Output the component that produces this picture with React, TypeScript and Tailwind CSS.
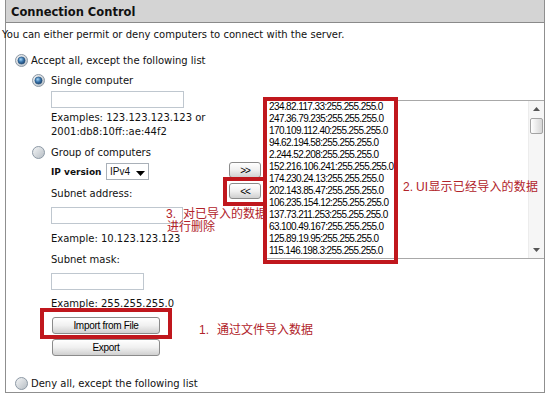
import type { ReactNode } from "react";

const ENTRIES = [
  "234.82.117.33:255.255.255.0",
  "247.36.79.235:255.255.255.0",
  "170.109.112.40:255.255.255.0",
  "94.62.194.58:255.255.255.0",
  "2.244.52.208:255.255.255.0",
  "152.216.106.241:255.255.255.0",
  "174.230.24.13:255.255.255.0",
  "202.143.85.47:255.255.255.0",
  "106.235.154.12:255.255.255.0",
  "137.73.211.253:255.255.255.0",
  "63.100.49.167:255.255.255.0",
  "125.89.19.95:255.255.255.0",
  "115.146.198.3:255.255.255.0",
];

function Radio({ id, checked }: { id: string; checked?: boolean }) {
  return (
    <svg width="13" height="13" viewBox="0 0 13 13" className="shrink-0">
      <defs>
        <linearGradient id={`${id}-ring`} x1="0" y1="0" x2="1" y2="1">
          <stop offset="0" stopColor="#f6f7f8" />
          <stop offset="1" stopColor="#b4bbc2" />
        </linearGradient>
        <radialGradient id={`${id}-dot`} cx="0.4" cy="0.35" r="0.7">
          <stop offset="0" stopColor="#a6d6f7" />
          <stop offset="0.5" stopColor="#3b77ae" />
          <stop offset="1" stopColor="#1b3d66" />
        </radialGradient>
      </defs>
      <circle cx="6.5" cy="6.5" r="6" fill={`url(#${id}-ring)`} stroke="#8d99a5" />
      {checked && (
        <circle cx="6.5" cy="6.5" r="3.6" fill={`url(#${id}-dot)`} stroke="#22507c" strokeWidth="0.6" />
      )}
    </svg>
  );
}

function Btn({ children, className }: { children: ReactNode; className: string }) {
  return (
    <button
      className={`flex items-center justify-center rounded-[3px] border border-[#8b8b8b] bg-linear-to-b from-white via-[#f0f0f0] to-[#d0d0d0] font-['Liberation_Sans',Arial,sans-serif] text-[10px] tracking-[-0.3px] text-black ${className}`}
    >
      {children}
    </button>
  );
}

function Field({ className }: { className: string }) {
  return <div className={`h-[17px] border border-[#bfc7cf] bg-white ${className}`} />;
}

export default function App() {
  return (
    <div className="relative h-[393px] w-[550px] overflow-hidden bg-white font-['DejaVu_Sans',Verdana,sans-serif] text-[10px] text-[#111]">
      <div className="ml-[5px] flex h-[393px] w-[540px] flex-col border-x border-b border-[#8f8f8f]">
        <div className="flex h-[23px] shrink-0 items-center border-b border-[#8a8a8a] bg-[#d4d4d4] pl-[5px] pt-[3px] text-[11.5px] font-bold">
          Connection Control
        </div>

        <div className="-ml-[4px] flex h-[22px] items-center">
          You can either permit or deny computers to connect with the server.
        </div>

        <div className="mt-[4px] flex h-[22px] items-center pl-[9px]">
          <Radio id="accept" checked />
          <span className="ml-[3px]">Accept all, except the following list</span>
        </div>

        <div className="flex pl-[26px]">
          <div className="flex w-[197px] shrink-0 flex-col">
            <div className="flex h-[18px] items-center">
              <Radio id="single" checked />
              <span className="ml-[6px]">Single computer</span>
            </div>
            <Field className="ml-[19px] mt-[2px] w-[133px]" />
            <div className="ml-[19px] mt-[3px] leading-[14px]">
              <div>Examples: 123.123.123.123 or</div>
              <div>2001:db8:10ff::ae:44f2</div>
            </div>

            <div className="mt-[4px] flex h-[18px] items-center">
              <Radio id="group" />
              <span className="ml-[6px]">Group of computers</span>
            </div>
            <div className="ml-[19px] mt-[2px] flex h-[18px] items-start">
              <span className="w-[55px] pt-[3px] text-[9px] font-bold">IP version</span>
              <div className="flex h-[17px] w-[43px] items-center border border-[#a9b0b8] bg-white pl-[3px] font-['Liberation_Sans',Arial,sans-serif] text-[10px]">
                <span className="flex-1">IPv4</span>
                <svg width="9" height="5" viewBox="0 0 9 5" className="mr-[3px] mt-[4px]">
                  <path d="M0 0H9L4.5 5Z" fill="#000" />
                </svg>
              </div>
            </div>
            <div className="ml-[19px] mt-[6px] leading-[14px]">Subnet address:</div>
            <Field className="ml-[19px] mt-[6px] w-[132px]" />
            <div className="ml-[19px] mt-[8px] leading-[14px]">Example: 10.123.123.123</div>
            <div className="ml-[19px] mt-[7px] leading-[14px]">Subnet mask:</div>
            <Field className="ml-[19px] mt-[6px] w-[93px]" />
            <div className="ml-[19px] mt-[7px] leading-[14px]">Example: 255.255.255.0</div>
            <Btn className="ml-[20px] mt-[6px] h-[17px] w-[108px]">Import from File</Btn>
            <Btn className="ml-[20px] mt-[5px] h-[17px] w-[108px]">Export</Btn>
          </div>

          <div className="mt-[91px] flex w-[32px] shrink-0 flex-col">
            <Btn className="h-[16px] w-[32px] tracking-[-1px]">&gt;&gt;</Btn>
            <Btn className="mt-[5px] h-[16px] w-[32px] tracking-[-1px]">&lt;&lt;</Btn>
          </div>

          <div className="ml-[3px] mt-[29px] flex h-[159px] flex-1 border-y border-l border-[#a8a8a8] bg-white">
            <div className="flex-1 pl-[4px] font-['Liberation_Sans',Arial,sans-serif] text-[10px] leading-[12px] tracking-[-0.6px] text-black">
              {ENTRIES.map((e) => (
                <div key={e}>{e}</div>
              ))}
            </div>
            <div className="flex w-[16px] flex-col border-l border-[#ececec] bg-[#f6f6f6]">
              <div className="flex h-[16px] items-center justify-center">
                <svg width="7" height="4" viewBox="0 0 7 4">
                  <path d="M0 4H7L3.5 0Z" fill="#555" />
                </svg>
              </div>
              <div className="mx-[1px] mt-[1px] h-[16px] rounded-[2px] border border-[#a3a3a3] bg-linear-to-r from-white to-[#d6d6d6]" />
              <div className="flex-1" />
              <div className="flex h-[16px] items-center justify-center">
                <svg width="7" height="4" viewBox="0 0 7 4">
                  <path d="M0 0H7L3.5 4Z" fill="#555" />
                </svg>
              </div>
            </div>
          </div>
        </div>

        <div className="mt-[18px] flex h-[18px] items-center pl-[9px]">
          <Radio id="deny" />
          <span className="ml-[3px]">Deny all, except the following list</span>
        </div>
      </div>

      {/* annotation boxes */}
      <div className="absolute left-[263px] top-[97px] h-[167px] w-[135px] border-4 border-[#c0171d]" />
      <div className="absolute left-[223px] top-[177px] h-[29px] w-[44px] border-4 border-[#c0171d]" />
      <div className="absolute left-[40px] top-[308px] h-[31px] w-[132px] border-4 border-[#c0171d]" />

      <div className="absolute left-[403px] top-[180px] flex font-['Liberation_Sans','Noto_Sans_CJK_SC',sans-serif] text-[12px] leading-[14px] text-[#b1232a]">
        <span className="w-[13px]">2.</span>
        <span className="tracking-[0.2px]">UI显示已经导入的数据</span>
      </div>
      <div className="absolute left-[166px] top-[208px] font-['Liberation_Sans','Noto_Sans_CJK_SC',sans-serif] text-[12px] leading-[13px] text-[#b1232a]">
        <div className="flex">
          <span className="w-[17px]">3.</span>
          <span>对已导入的数据</span>
        </div>
        <div className="pl-[1px]">进行删除</div>
      </div>
      <div className="absolute left-[199px] top-[323px] flex font-['Liberation_Sans','Noto_Sans_CJK_SC',sans-serif] text-[12px] leading-[14px] text-[#b1232a]">
        <span className="w-[18px]">1.</span>
        <span>通过文件导入数据</span>
      </div>
    </div>
  );
}
